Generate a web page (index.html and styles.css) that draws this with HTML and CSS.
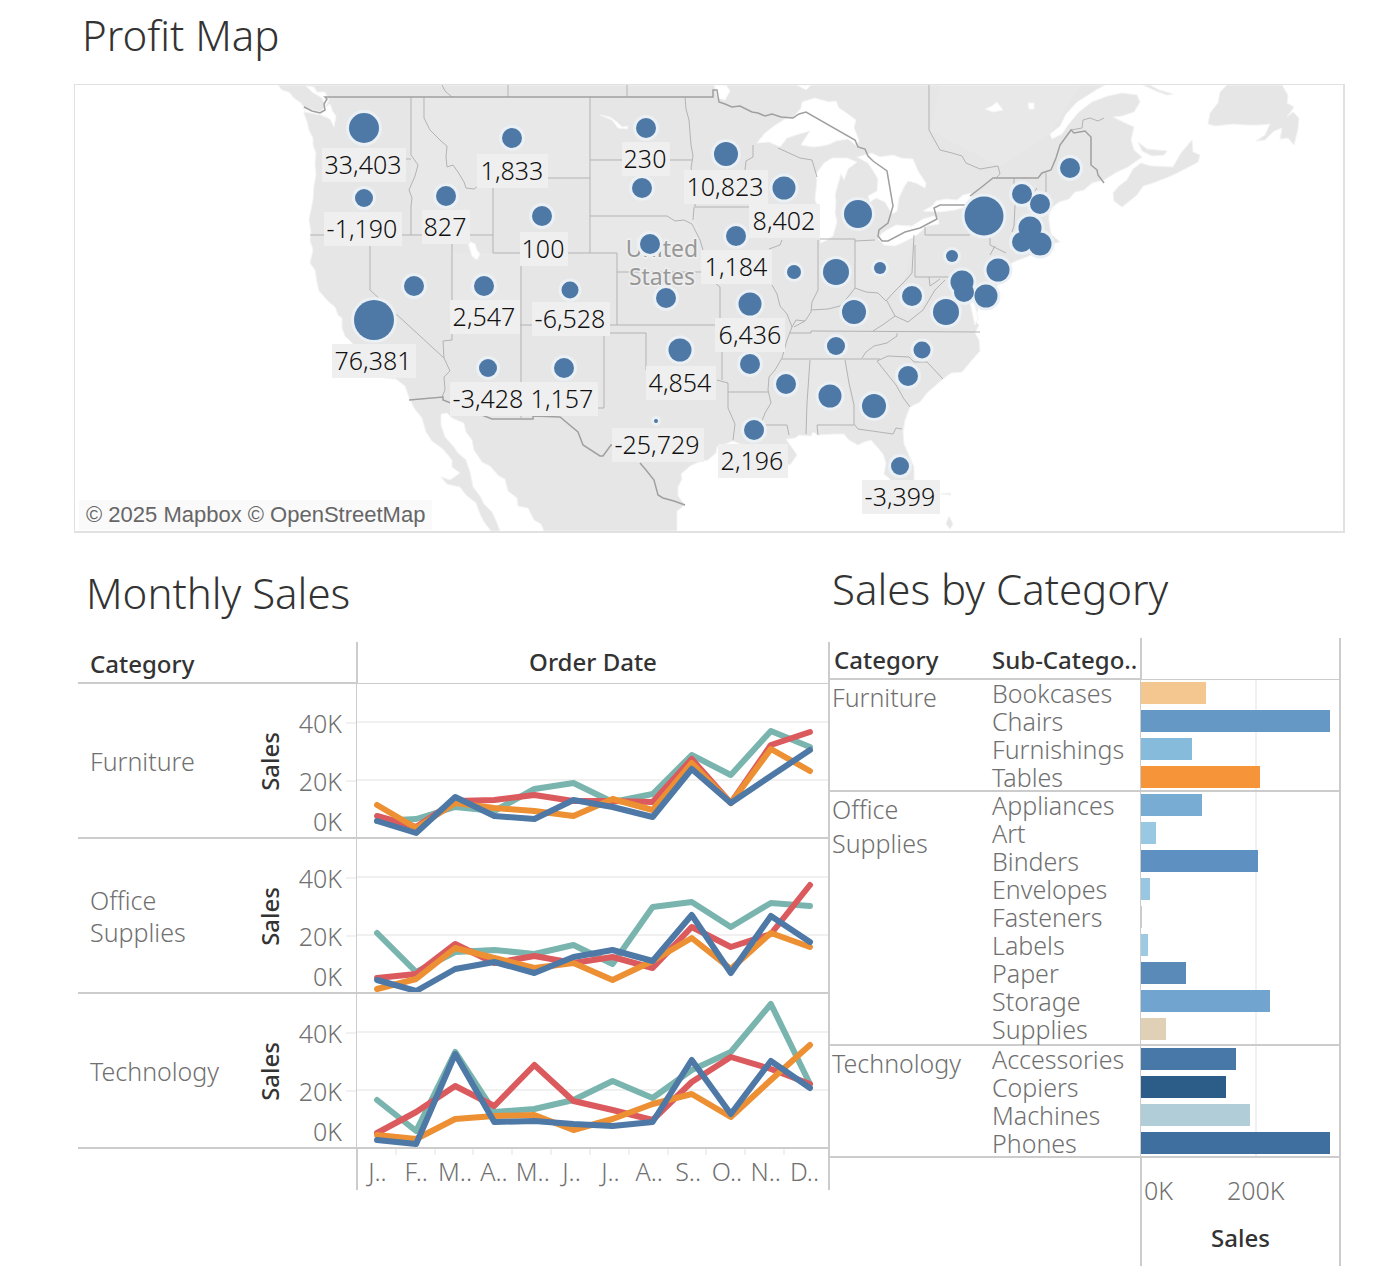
FILE: index.html
```html
<!DOCTYPE html>
<html lang="en">
<head>
<meta charset="utf-8">
<title>Sales Dashboard</title>
<link rel="stylesheet" href="styles.css">
</head>
<body>
<main class="dashboard">
<section class="map-panel">
<h1 class="title">Profit Map</h1>
<div class="map">
<svg class="map-canvas" viewBox="75 85 1268 446" role="img" aria-label="Profit by state">
<defs>
<g id="marks">
<circle cx="364" cy="128" r="15"/><circle cx="364" cy="198" r="9"/><circle cx="446" cy="196" r="10"/><circle cx="512" cy="138" r="10"/><circle cx="542" cy="216" r="10"/><circle cx="414" cy="286" r="10"/><circle cx="374" cy="320" r="20"/><circle cx="484" cy="286" r="10"/><circle cx="570" cy="290" r="8.500"/><circle cx="488" cy="368" r="9"/><circle cx="564" cy="368" r="10"/><circle cx="646" cy="128" r="10"/><circle cx="642" cy="188" r="10"/><circle cx="650" cy="244" r="10"/><circle cx="666" cy="298" r="10"/><circle cx="680" cy="350" r="11.500"/><circle cx="656" cy="421" r="2"/><circle cx="726" cy="154" r="12"/><circle cx="784" cy="188" r="11.500"/><circle cx="736" cy="236" r="10"/><circle cx="750" cy="304" r="11.500"/><circle cx="750" cy="364" r="10"/><circle cx="754" cy="430" r="10"/><circle cx="794" cy="272" r="7"/><circle cx="836" cy="272" r="13"/><circle cx="858" cy="214" r="14"/><circle cx="880" cy="268" r="6"/><circle cx="854" cy="312" r="12"/><circle cx="836" cy="346" r="9"/><circle cx="786" cy="384" r="10"/><circle cx="830" cy="396" r="11.500"/><circle cx="874" cy="406" r="12"/><circle cx="900" cy="466" r="9"/><circle cx="908" cy="376" r="10"/><circle cx="922" cy="350" r="8.500"/><circle cx="946" cy="312" r="13"/><circle cx="912" cy="296" r="10"/><circle cx="952" cy="256" r="6"/><circle cx="962" cy="282" r="11.500"/><circle cx="964" cy="292" r="10"/><circle cx="986" cy="296" r="11.500"/><circle cx="998" cy="270" r="11.500"/><circle cx="984" cy="216" r="19.500"/><circle cx="1022" cy="194" r="10"/><circle cx="1040" cy="204" r="10"/><circle cx="1030" cy="228" r="11.500"/><circle cx="1022" cy="242" r="10"/><circle cx="1040" cy="244" r="11.500"/><circle cx="1070" cy="168" r="10"/>
</g>
</defs>
<g class="land">
<path d="M278 85L282 90 289 92 294 98 301 103 305 109 304 114 307 121 309 130 313 138 313 145 316 153 315 163 316 175 314 186 313 200 311 210 309 219 311 232 310 240 313 250 310 263 315 270 317 282 319 291 328 301 335 307 338 315 342 318 342 328 345 336 353 344 365 352 372 368 385 378 396 379 405 386 409 397 414 408 422 418 426 432 432 441 443 449 452 460 452 467 460 473 450 480 441 477 447 484 460 487 466 495 476 503 480 514 484 522 491 531 500 531 497 523 492 512 484 504 480 496 473 487 470 472 466 460 457 452 454 447 445 437 441 425 441 414 447 413 452 418 464 423 466 432 472 440 474 450 482 462 490 466 499 476 505 479 508 491 517 498 518 506 528 508 534 520 541 524 544 531 677 531 677 511 685 505 678 496 678 487 682 479 681 474 690 466 701 461 708 460 716 453 717 447 733 441 755 450 775 460 790 465 797 455 786 439 795 438 799 435 811 436 813 432 818 435 833 434 844 434 849 440 858 445 864 442 871 440 878 448 883 454 886 463 884 474 890 479 891 490 900 505 910 512 917 506 919 496 914 482 914 467 908 453 904 444 903 432 905 420 910 407 920 402 927 393 943 379 951 373 962 372 972 360 980 351 979 340 975 333 979 325 973 319 978 310 974 302 983 307 987 302 994 297 994 290 1004 277 1006 266 1016 261 1037 253 1042 254 1047 245 1060 242 1051 234 1049 221 1049 210 1059 202 1069 199 1075 192 1084 190 1092 183 1104 180 1117 172 1128 167 1142 157 1134 150 1131 140 1134 127 1125 123 1113 117 1122 116 1134 112 1140 102 1137 95 1122 93 1108 96 1092 102 1079 112 1068 125 1062 134 1052 139 1050 134 1060 126 1066 114 1077 102 1096 90 1105 85Z"/>
<path d="M1113 193L1119 186 1127 180 1133 169 1141 163 1151 166 1173 167 1181 153 1192 140 1193 152 1200 155 1198 162 1187 168 1171 176 1153 183 1143 186 1137 195 1122 207 1114 201Z"/>
<path d="M1138 142L1147 149 1167 151 1164 155 1152 156 1142 151Z"/>
<path d="M1227 85L1220 92 1218 103 1210 113 1208 124 1215 126 1233 124 1247 125 1258 125 1270 124 1265 135 1256 141 1265 140 1274 131 1282 128 1280 139 1288 138 1294 145 1298 129 1299 118 1293 112 1287 117 1294 107 1287 103 1288 95 1282 85Z"/>
<path d="M1150 85L1159 90 1173 94 1167 95 1156 91 1143 85Z"/>
<path d="M946 524L949 516 953 524 950 529Z"/>
<path d="M941 494L950 493 951 495Z"/>
</g>
<g class="shade">
<path d="M411 97H590V178H493V235H411Z"/>
<path d="M590 160H692L694 207 700 240 707 272H617V253H590Z"/>
<path d="M452 253H521V325H452Z"/>
<path d="M855 241L915 235 905 280 887 298 855 288Z"/>
<path d="M810 359H845L854 425 806 431Z"/>
<path d="M940 85H1080L1050 134 1000 167 930 130Z"/>
</g>
<g class="water">
<path d="M306 86L314 87 317 92 325 92 329 100 325 107 330 104 333 112 336 116 334 127 330 119 321 115 305 112 303 107 320 112 326 106 322 98 312 92Z"/>
<path d="M467 240L475 244 477 250 480 254 477 260 472 256Z"/>
<path d="M600 115L610 117 617 122 622 127 628 126 627 129 618 128 612 120Z"/>
<path d="M714 85H726L730 91 725 100 718 98Z"/>
<path d="M757 143L765 133 774 126 785 119 793 118 801 108 802 102 815 98 829 102 836 101 839 108 848 114 856 120 854 128 859 140 857 146 848 139 836 141 830 144 822 146 813 147 801 145 806 137 810 131 799 134 787 138 780 147 769 142Z"/>
<path d="M817 180L816 174 824 163 832 158 847 158 857 162 848 169 844 180 841 174 838 184 835 195 836 202 835 213 837 222 833 236 827 240 821 243 817 226 819 209 815 200Z"/>
<path d="M857 157L872 153 880 157 893 155 901 158 913 159 918 171 926 183 925 188 916 183 908 181 904 187 899 198 897 211 892 214 885 202 876 198 870 202 868 196 877 191 878 179 872 169 868 163Z"/>
<path d="M887 230L896 225 912 226 923 219 934 216 938 218 939 224 927 226 917 235 906 241 895 246 884 245 878 239 882 233Z"/>
<path d="M923 211L932 206 936 201 946 199 957 200 963 195 972 193 970 203 965 207 955 210 940 212Z"/>
<path d="M985 109L992 106 997 102 1003 110 993 112Z"/>
<path d="M1028 103H1034V109H1029Z"/>
<path d="M797 85H811L806 90Z"/>
<path d="M970 302L974 301 978 318 975 325Z"/>
</g>
<g class="state-lines">
<path d="M411 97V155L418 165 415 176 409 190 412 198 411 206V235M406 159H411M424 97V118L430 130 441 141 447 146 446 157 447 167 453 165 458 172 464 182 466 188 474 189 478 186 493 187V253M310 235H493M493 178H590M590 97V253M493 253H617V325M590 160H692M590 216H667L675 221 684 220 692 224 700 240 703 250M685 97L686 109 689 120 691 145 693 156 691 168 695 182V207H750M694 207L693 220M617 272H707M370 235V290L444 358 450 371 444 377 445 390 442 397M452 235V340L443 341 444 358M521 253V418M452 325H720M610 333H646V370M604 333V408H598M716 284L720 287V325L722 333V380M717 380L728 383V408L735 424 733 440M728 392H768M753 145V157L746 161 745 170M778 148L789 153 800 158 812 160 817 177M782 240L780 245 769 249M772 285L777 294 780 306 787 314 792 327M818 240V290L812 302 811 312 805 321 794 327M820 239H855V288M855 241L875 240M811 310L828 309 840 306 848 297 855 288 866 292 878 293 886 301 893 293 905 281 912 273 914 235M915 245V277H965M925 227V235H970M887 301L895 316 908 322 923 310 935 290 945 280M895 316L884 324 873 331M929 277L930 286 940 279M792 327L796 320 805 321M790 333H811V331L980 332M782 359H880M862 358L866 352 874 346 887 343 897 336V333M877 361L888 356 909 357 914 362H927L943 379M877 361L884 370 896 385 904 399 910 407M810 360L807 403 806 434M845 360L849 383 854 405V424L858 429 893 434 896 428 902 429M818 435L817 425H854M792 327L787 340 782 358 775 370 769 377 768 390 771 403 765 413 762 421M765 425H787L789 435M508 85V97M442 85L445 91 452 97M627 85V97M929 85V130L940 150 952 153 962 156 966 163 980 169 998 166 1000 174 996 178M1071 130L1082 128 1083 120 1090 118 1098 121 1104 118M990 238V245L1006 253M995 246L990 255M1015 205L1014 226 1012 232M1014 178V188M1046 173V192M1037 188L1034 192"/>
</g>
<g class="border-lines">
<path d="M304 107L312 111 320 113 325 110 324 104 327 99 325 97H713V90L717 90 719 102 725 104 732 107 740 106 752 112 758 113 765 116 772 114 781 117 793 118 799 114 806 112 855 140 858 147 865 149 868 156 873 161 887 171 893 206 888 223 879 230 878 236 882 241 888 241 905 232 920 228 937 219 934 208 940 205H968M970 196L983 186 993 178H1038L1042 173 1051 170 1056 158 1060 145 1071 130 1074 133 1085 131 1091 137V165L1097 170 1098 175 1104 183M409 400L443 397V400L492 419H533V416L560 417 578 432 583 445 600 456 603 456 611 445H622M640 463L646 470 654 480 658 495 663 498 674 501 685 505"/>
</g>
<g class="place"><text x="662" y="257">United</text><text x="662" y="285">States</text></g>
<use class="halos" href="#marks"/>
<use class="dots" href="#marks"/>
<g class="label-boxes">
<path d="M322 148h84v34h-84zM477 154h71v34h-71zM622 142h48v34h-48zM684 170h84v34h-84zM324 212h78v34h-78zM422 210h48v34h-48zM520 232h48v34h-48zM749 204h71v34h-71zM701 250h71v34h-71zM450 300h70v34h-70zM532 302h78v34h-78zM715 318h70v34h-70zM332 344h84v34h-84zM646 366h70v34h-70zM450 382h148v34h-148zM612 428h92v34h-92zM718 444h70v34h-70zM862 480h78v34h-78z"/>
</g>
<g class="labels">
<text x="363" y="174">33,403</text><text x="512" y="180">1,833</text><text x="645" y="168">230</text><text x="725" y="196">10,823</text><text x="362" y="238">-1,190</text><text x="445" y="236">827</text><text x="543" y="258">100</text><text x="784" y="230">8,402</text><text x="736" y="276">1,184</text><text x="484" y="326">2,547</text><text x="570" y="328">-6,528</text><text x="750" y="344">6,436</text><text x="373" y="370">76,381</text><text x="680" y="392">4,854</text><text x="488" y="408">-3,428</text><text x="562" y="408">1,157</text><text x="657" y="454">-25,729</text><text x="752" y="470">2,196</text><text x="900" y="506">-3,399</text>
</g>
</svg>
<p class="credits"><a href="#mapbox">© 2025 Mapbox</a> <a href="#osm">© OpenStreetMap</a></p>
</div>
</section>
<div class="charts">
<section class="monthly">
<h2 class="title">Monthly Sales</h2>
<div class="monthly-head"><div class="head-category">Category</div><div class="head-date">Order Date</div></div>
<div class="trend">
<div class="trend-name">Furniture</div><div class="trend-measure">Sales</div>
<div class="trend-axis"><span>40K</span><span>20K</span><span class="zero">0K</span></div>
<svg class="plot" viewBox="357 684 470 153" preserveAspectRatio="none" role="img" aria-label="Furniture sales by month">
<path class="grid" d="M357 722H827M357 780H827"/>
<polyline class="teal" points="377,821 416,819 455,807 494,811 534,789 573,783 612,802 652,794 691,755 730,775 770,731 809,747"/>
<polyline class="red" points="377,816 416,827 455,801 494,800 534,795 573,801 612,801 652,802 691,759 730,803 770,745 809,732"/>
<polyline class="orange" points="377,805 416,828 455,803 494,808 534,811 573,816 612,799 652,810 691,763 730,803 770,749 809,771"/>
<polyline class="blue" points="377,821 416,833 455,797 494,816 534,819 573,800 612,807 652,817 691,769 730,803 770,776 809,750"/>
</svg></div>
<div class="trend">
<div class="trend-name">Office Supplies</div><div class="trend-measure">Sales</div>
<div class="trend-axis"><span>40K</span><span>20K</span><span class="zero">0K</span></div>
<svg class="plot" viewBox="357 838 470 153" preserveAspectRatio="none" role="img" aria-label="Office Supplies sales by month">
<path class="grid" d="M357 876H827M357 934H827"/>
<polyline class="teal" points="377,932 416,971 455,951 494,949 534,953 573,944 612,963 652,906 691,901 730,926 770,902 809,905"/>
<polyline class="red" points="377,977 416,973 455,943 494,962 534,955 573,962 612,956 652,967 691,926 730,946 770,933 809,884"/>
<polyline class="orange" points="377,988 416,978 455,947 494,957 534,967 573,962 612,979 652,960 691,937 730,968 770,932 809,946"/>
<polyline class="blue" points="377,979 416,990 455,968 494,961 534,972 573,956 612,949 652,960 691,914 730,972 770,915 809,941"/>
</svg></div>
<div class="trend">
<div class="trend-name">Technology</div><div class="trend-measure">Sales</div>
<div class="trend-axis"><span>40K</span><span>20K</span><span class="zero">0K</span></div>
<svg class="plot" viewBox="357 994 470 153" preserveAspectRatio="none" role="img" aria-label="Technology sales by month">
<path class="grid" d="M357 1032H827M357 1090H827"/>
<polyline class="teal" points="377,1100 416,1131 455,1052 494,1112 534,1109 573,1100 612,1081 652,1098 691,1070 730,1052 770,1004 809,1084"/>
<polyline class="red" points="377,1133 416,1112 455,1086 494,1106 534,1065 573,1101 612,1110 652,1120 691,1082 730,1057 770,1069 809,1084"/>
<polyline class="orange" points="377,1135 416,1139 455,1119 494,1116 534,1115 573,1130 612,1119 652,1104 691,1094 730,1117 770,1080 809,1045"/>
<polyline class="blue" points="377,1140 416,1144 455,1054 494,1122 534,1121 573,1124 612,1126 652,1122 691,1060 730,1114 770,1061 809,1088"/>
</svg></div>
<ol class="months"><li>J..</li><li>F..</li><li>M..</li><li>A..</li><li>M..</li><li>J..</li><li>J..</li><li>A..</li><li>S..</li><li>O..</li><li>N..</li><li>D..</li></ol>
</section>
<section class="by-category">
<h2 class="title">Sales by Category</h2>
<table class="bars">
<thead><tr><th class="col-cat" scope="col">Category</th><th class="col-sub" scope="col">Sub-Catego..</th><th class="col-bar" aria-label="Sales"></th></tr></thead>
<tbody>
<tr><th rowspan="4" scope="rowgroup">Furniture</th><td>Bookcases</td><td class="cell"><div class="bar" style="width:33%;background:#f3c78f"></div></td></tr>
<tr><td>Chairs</td><td class="cell"><div class="bar" style="width:95.500%;background:#6598c5"></div></td></tr>
<tr><td>Furnishings</td><td class="cell"><div class="bar" style="width:25.700%;background:#87bbdb"></div></td></tr>
<tr><td>Tables</td><td class="cell"><div class="bar" style="width:60%;background:#f59438"></div></td></tr>
</tbody>
<tbody class="long-group">
<tr><th rowspan="9" scope="rowgroup">Office<br>Supplies</th><td>Appliances</td><td class="cell"><div class="bar" style="width:31%;background:#79acd3"></div></td></tr>
<tr><td>Art</td><td class="cell"><div class="bar" style="width:7.700%;background:#9ac7e1"></div></td></tr>
<tr><td>Binders</td><td class="cell"><div class="bar" style="width:59%;background:#5e91c1"></div></td></tr>
<tr><td>Envelopes</td><td class="cell"><div class="bar" style="width:4.500%;background:#99c6e1"></div></td></tr>
<tr><td>Fasteners</td><td class="cell"><div class="bar" style="width:.500%;background:#c6ccd0"></div></td></tr>
<tr><td>Labels</td><td class="cell"><div class="bar" style="width:3.500%;background:#9dc9e2"></div></td></tr>
<tr><td>Paper</td><td class="cell"><div class="bar" style="width:22.700%;background:#5a8ab7"></div></td></tr>
<tr><td>Storage</td><td class="cell"><div class="bar" style="width:65%;background:#71a5cf"></div></td></tr>
<tr><td>Supplies</td><td class="cell"><div class="bar" style="width:12.700%;background:#e0d0b6"></div></td></tr>
</tbody>
<tbody>
<tr><th rowspan="4" scope="rowgroup">Technology</th><td>Accessories</td><td class="cell"><div class="bar" style="width:48%;background:#4778a8"></div></td></tr>
<tr><td>Copiers</td><td class="cell"><div class="bar" style="width:43%;background:#2c5d89"></div></td></tr>
<tr><td>Machines</td><td class="cell"><div class="bar" style="width:55%;background:#b1cdd7"></div></td></tr>
<tr><td>Phones</td><td class="cell"><div class="bar" style="width:95.500%;background:#3f6f9f"></div></td></tr>
</tbody>
</table>
<div class="bar-axis"><div class="ticks"><span>0K</span><span>200K</span></div><div class="axis-title">Sales</div></div>
</section>
</div>
</main>
</body>
</html>
```
FILE: styles.css
```css
* { box-sizing: border-box; }
body {
  margin: 0;
  background: #fff;
  color: #707070;
  font: 300 25px/28px "Noto Sans", sans-serif;
}
.dashboard { padding: 0 47px 0 74px; }
.title {
  margin: 0;
  font-size: 42px;
  font-weight: 300;
  line-height: 56px;
  color: #333;
}
.map-panel .title { padding: 7px 0 21px 8px; }

.map {
  position: relative;
  border: 1px solid #e1e1e1;
  border-right-width: 2px;
  border-bottom-width: 2px;
}
.map-canvas { display: block; width: 100%; height: auto; }
.land { fill: #e6e6e6; stroke: #f3f3f3; stroke-width: 1; }
.shade { fill: #fff; opacity: .1; }
.water { fill: #fff; stroke: #f5f5f5; }
.state-lines { fill: none; stroke: #b3b3b3; stroke-width: 1; }
.border-lines { fill: none; stroke: #a0a0a0; stroke-width: 1.5; }
.place text {
  font-size: 23px;
  font-weight: 400;
  text-anchor: middle;
  fill: #989898;
  stroke: #efefef;
  stroke-width: 3;
  paint-order: stroke;
}
.halos { fill: #ebf0f5; stroke: #ebf0f5; stroke-width: 6; }
.dots { fill: #4e79a7; }
.label-boxes { fill: #efefef; }
.labels { fill: #111; font-size: 25px; text-anchor: middle; }
.credits {
  position: absolute;
  left: 4px;
  bottom: 1px;
  margin: 0;
  padding: 0 7px;
  background: #fafafa;
  font: 400 22px/30px "Liberation Sans", sans-serif;
}
.credits a { color: #666; text-decoration: none; }

.charts { display: grid; grid-template-columns: 752fr 511fr; padding: 0 4px; }
.monthly .title { padding: 32px 0 21px 8px; }
.by-category .title { padding: 28px 0 21px 2px; }
.monthly-head, .trend, .months { border-right: 2px solid #ccc; }
.monthly-head {
  display: grid;
  grid-template-columns: 278px 1fr;
  height: 42px;
  color: #333;
  font-size: 24px;
  font-weight: 500;
  line-height: 36px;
}
.head-category { padding: 4px 0 0 12px; border-bottom: 2px solid #ccc; }
.head-date { padding-top: 2px; border-left: 2px solid #ccc; border-bottom: 1px solid #ccc; text-align: center; }
.trend {
  display: grid;
  grid-template-columns: 180px 24px 74px 1fr;
  height: 155px;
  border-bottom: 2px solid #ccc;
}
.trend-name { align-self: center; width: 140px; padding-left: 12px; line-height: 32px; }
.trend-measure {
  align-self: center;
  justify-self: center;
  writing-mode: vertical-rl;
  transform: rotate(180deg);
  color: #333;
  font-size: 24px;
  font-weight: 500;
  line-height: 24px;
}
.trend-axis { display: flex; flex-direction: column; gap: 24px; padding-top: 22px; line-height: 34px; }
.trend-axis span { display: flex; align-items: center; justify-content: flex-end; gap: 4px; }
.trend-axis span::after { content: ""; width: 10px; height: 2px; background: #f1f1f1; }
.trend-axis .zero { margin-top: -18px; }
.trend-axis .zero::after { background: none; }
.plot { display: block; width: 100%; height: 153px; border-left: 1px solid #ccc; }
.plot polyline {
  fill: none;
  stroke-width: 6;
  stroke-linecap: round;
  stroke-linejoin: round;
  vector-effect: non-scaling-stroke;
}
.grid { stroke: #f0f0f0; stroke-width: 2; }
.teal { stroke: #79b5ae; }
.red { stroke: #db5a5e; }
.orange { stroke: #ec9033; }
.blue { stroke: #4e78a5; }
.months {
  display: grid;
  grid-template-columns: repeat(12, 1fr);
  height: 41px;
  margin: 0 0 0 278px;
  padding: 0 4px 0 0;
  border-left: 2px solid #ccc;
  list-style: none;
  line-height: 44px;
  text-align: center;
}
.months li { background: linear-gradient(#f0f0f0, #f0f0f0) right top / 2px 6px no-repeat; }
.months li:last-child { background: none; }

.bars { width: 100%; table-layout: fixed; border-collapse: separate; border-spacing: 0; }
.bars th, .bars td { padding: 0; text-align: left; vertical-align: top; }
.bars thead th {
  height: 42px;
  padding-top: 4px;
  border-bottom: 2px solid #ccc;
  color: #333;
  font-size: 24px;
  font-weight: 500;
  line-height: 36px;
}
.bars .col-cat { width: 162px; padding-left: 4px; }
.bars .col-sub { width: 148px; white-space: nowrap; }
.bars .col-bar { border-left: 2px solid #ccc; border-right: 2px solid #ccc; border-bottom-width: 1px; }
.bars td { height: 28px; line-height: 26px; }
.bars tbody th { padding-left: 2px; font-weight: 300; line-height: 34px; }
.bars tbody tr:last-child td, .bars tbody tr:first-child th { border-bottom: 2px solid #ccc; }
.bars .long-group tr:last-child td { height: 30px; }
.bars .cell {
  padding-top: 2px;
  border-left: 1px solid #ccc;
  border-right: 2px solid #ccc;
  background: linear-gradient(#f1f1f1, #f1f1f1) 58% 0 / 2px 100% no-repeat;
}
.bar { height: 22px; }
.bar-axis {
  height: 108px;
  margin-left: 310px;
  border-left: 2px solid #ccc;
  border-right: 2px solid #ccc;
  text-align: center;
}
.ticks { display: flex; gap: 54px; padding: 15px 0 0 2px; line-height: 34px; }
.axis-title { padding-top: 14px; color: #333; font-size: 24px; font-weight: 500; line-height: 34px; }
```
